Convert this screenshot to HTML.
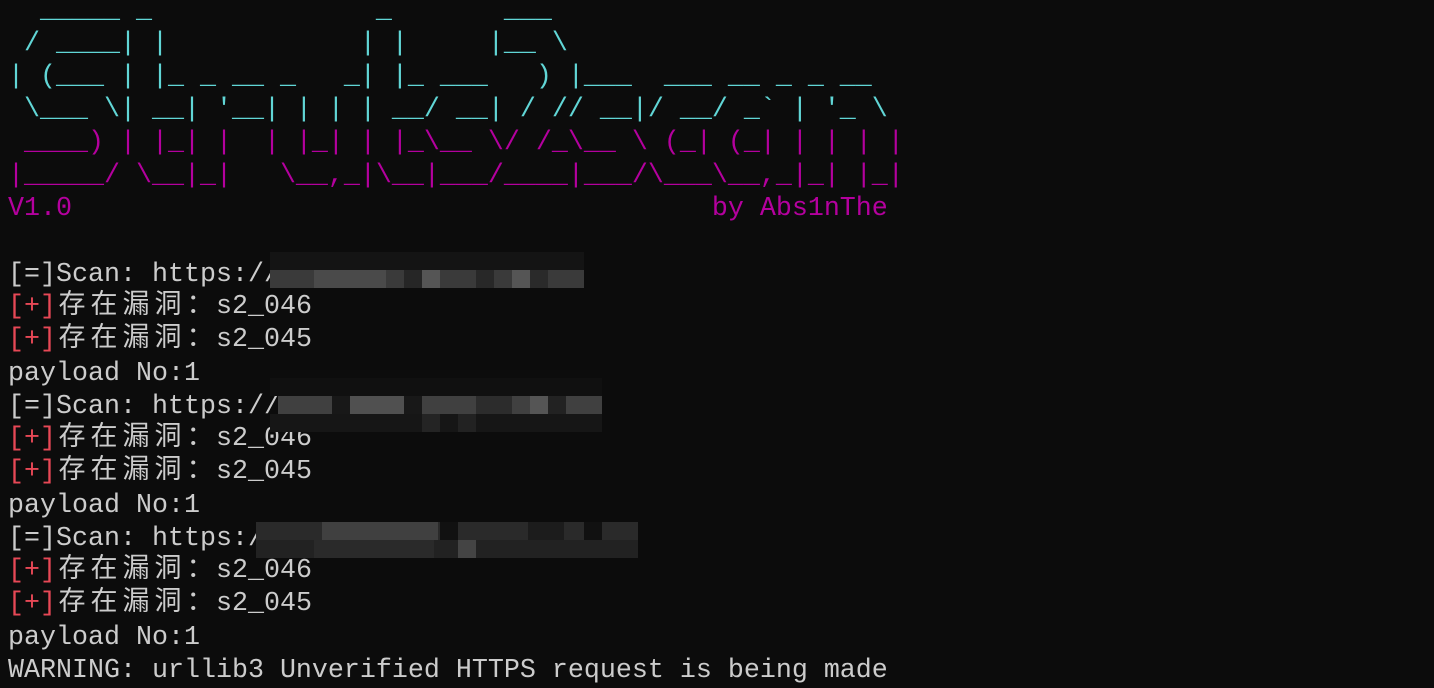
<!DOCTYPE html>
<html><head><meta charset="utf-8"><style>
html,body{margin:0;padding:0;background:#0c0c0c;width:1434px;height:661px;overflow:hidden;}
#t{position:absolute;left:8px;top:-5px;margin:0;font-family:"Liberation Mono",monospace;font-size:26.67px;color:#cccccc;}
#t div{height:33px;line-height:33px;white-space:pre;overflow:visible;}
#t div.k{position:relative;top:-4px;}
.c{color:#61d6d6}.m{color:#b4009e}.r{color:#e74856}
.z{font-family:"Noto Sans CJK SC","WenQuanYi Zen Hei",sans-serif;display:inline-block;width:32px;line-height:1;text-align:center;vertical-align:baseline;font-size:27px;}
.b{position:absolute;height:18px;}
</style></head><body>
<div id="t">
<div class="c">  _____ _              _       ___</div>
<div class="c"> / ____| |            | |     |__ \</div>
<div class="c">| (___ | |_ _ __ _   _| |_ ___   ) |___  ___ __ _ _ __</div>
<div class="c"> \___ \| __| '__| | | | __/ __| / // __|/ __/ _` | '_ \</div>
<div class="m"> ____) | |_| |  | |_| | |_\__ \/ /_\__ \ (_| (_| | | | |</div>
<div class="m">|_____/ \__|_|   \__,_|\__|___/____|___/\___\__,_|_| |_|</div>
<div class="m">V1.0                                        by Abs1nThe</div>
<div> </div>
<div>[=]Scan: https://</div>
<div class="k"><span class="r">[+]</span><span class="z">存</span><span class="z">在</span><span class="z">漏</span><span class="z">洞</span><span class="z">：</span>s2_046</div>
<div class="k"><span class="r">[+]</span><span class="z">存</span><span class="z">在</span><span class="z">漏</span><span class="z">洞</span><span class="z">：</span>s2_045</div>
<div>payload No:1</div>
<div>[=]Scan: https://</div>
<div class="k"><span class="r">[+]</span><span class="z">存</span><span class="z">在</span><span class="z">漏</span><span class="z">洞</span><span class="z">：</span>s2_046</div>
<div class="k"><span class="r">[+]</span><span class="z">存</span><span class="z">在</span><span class="z">漏</span><span class="z">洞</span><span class="z">：</span>s2_045</div>
<div>payload No:1</div>
<div>[=]Scan: https://</div>
<div class="k"><span class="r">[+]</span><span class="z">存</span><span class="z">在</span><span class="z">漏</span><span class="z">洞</span><span class="z">：</span>s2_046</div>
<div class="k"><span class="r">[+]</span><span class="z">存</span><span class="z">在</span><span class="z">漏</span><span class="z">洞</span><span class="z">：</span>s2_045</div>
<div>payload No:1</div>
<div>WARNING: urllib3 Unverified HTTPS request is being made</div>
</div>

<div class="b" style="left:270px;top:252px;width:314px;background:#141414"></div>
<div class="b" style="left:270px;top:270px;width:314px;background:#3a3a3a"></div>
<div class="b" style="left:314px;top:270px;width:72px;background:#4a4a4a"></div>
<div class="b" style="left:404px;top:270px;width:18px;background:#262626"></div>
<div class="b" style="left:422px;top:270px;width:18px;background:#555"></div>
<div class="b" style="left:476px;top:270px;width:18px;background:#282828"></div>
<div class="b" style="left:512px;top:270px;width:18px;background:#555"></div>
<div class="b" style="left:530px;top:270px;width:18px;background:#2a2a2a"></div>
<div class="b" style="left:270px;top:378px;width:332px;background:#101010"></div>
<div class="b" style="left:278px;top:396px;width:324px;background:#404040"></div>
<div class="b" style="left:332px;top:396px;width:18px;background:#181818"></div>
<div class="b" style="left:350px;top:396px;width:54px;background:#505050"></div>
<div class="b" style="left:404px;top:396px;width:18px;background:#181818"></div>
<div class="b" style="left:476px;top:396px;width:36px;background:#2c2c2c"></div>
<div class="b" style="left:530px;top:396px;width:18px;background:#555"></div>
<div class="b" style="left:548px;top:396px;width:18px;background:#222"></div>
<div class="b" style="left:270px;top:414px;width:332px;background:#161616"></div>
<div class="b" style="left:422px;top:414px;width:18px;background:#242424"></div>
<div class="b" style="left:458px;top:414px;width:18px;background:#222"></div>
<div class="b" style="left:256px;top:522px;width:382px;background:#2a2a2a"></div>
<div class="b" style="left:322px;top:522px;width:116px;background:#404040"></div>
<div class="b" style="left:440px;top:522px;width:18px;background:#111"></div>
<div class="b" style="left:528px;top:522px;width:36px;background:#1c1c1c"></div>
<div class="b" style="left:584px;top:522px;width:18px;background:#111"></div>
<div class="b" style="left:256px;top:540px;width:382px;background:#222"></div>
<div class="b" style="left:314px;top:540px;width:120px;background:#2a2a2a"></div>
<div class="b" style="left:458px;top:540px;width:18px;background:#444"></div>
</body></html>
